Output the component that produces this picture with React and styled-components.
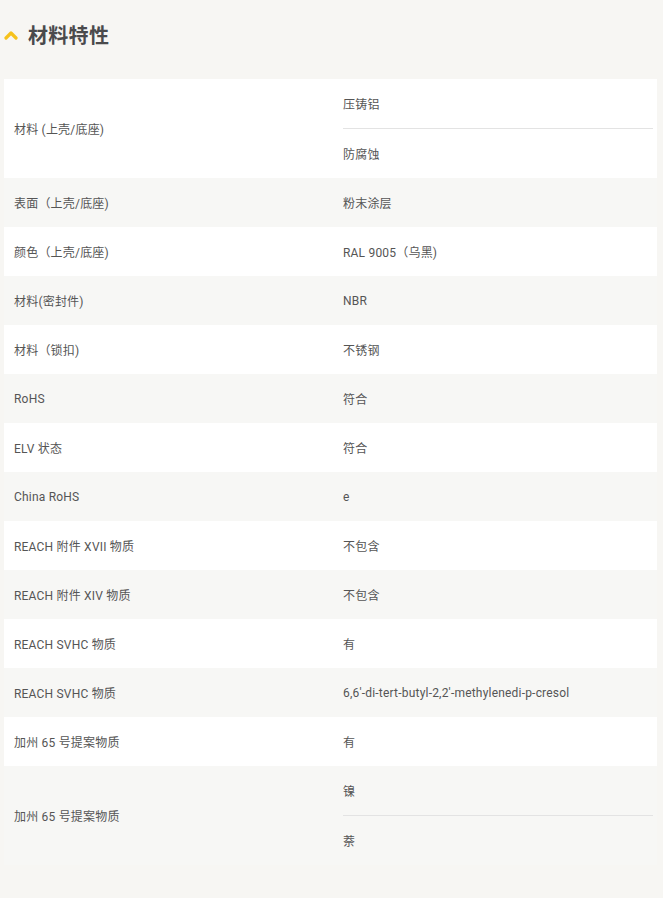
import React from "react";
import styled, { createGlobalStyle } from "styled-components";

const Global = createGlobalStyle`
  html, body { margin: 0; padding: 0; background: #f7f6f3; }
  body { font-family: Roboto, "Noto Sans CJK SC", "Noto Sans", sans-serif; color: #555; }
`;

const Page = styled.div`
  padding: 0 6px 34px 4px;
  background: #f7f6f3;
`;

const Heading = styled.h2`
  display: flex;
  align-items: flex-start;
  gap: 10px;
  margin: 0;
  padding-top: 24px;
  height: 55px;
  line-height: 22px;
  font-family: "Noto Sans CJK SC", sans-serif;
  font-size: 20px;
  font-weight: 700;
  color: #4a4a4c;
  letter-spacing: 0.3px;
`;

const Chevron = styled.svg`
  width: 14px;
  height: 10px;
  margin-top: 6px;
  flex: none;
`;

const Table = styled.div`
  display: flex;
  flex-direction: column;
`;

const Row = styled.div`
  display: grid;
  grid-template-columns: 329px 1fr;
  background: ${(p) => (p.$alt ? "#f7f7f5" : "#ffffff")};
  font-size: 12px;
  letter-spacing: 0.2px;
`;

const Label = styled.div`
  display: flex;
  align-items: center;
  padding: 0 10px;
  min-height: 49px;
`;

const Values = styled.div`
  display: flex;
  flex-direction: column;
`;

const Value = styled.div`
  display: flex;
  align-items: center;
  height: 49px;
  margin: 0 4px 0 10px;
  & + & {
    border-top: 1px solid #e3e3e3;
  }
`;

const rows = [
  ["材料 (上壳/底座)", ["压铸铝", "防腐蚀"]],
  ["表面（上壳/底座)", ["粉末涂层"]],
  ["颜色（上壳/底座)", ["RAL 9005（乌黑)"]],
  ["材料(密封件)", ["NBR"]],
  ["材料（锁扣)", ["不锈钢"]],
  ["RoHS", ["符合"]],
  ["ELV 状态", ["符合"]],
  ["China RoHS", ["e"]],
  ["REACH 附件 XVII 物质", ["不包含"]],
  ["REACH 附件 XIV 物质", ["不包含"]],
  ["REACH SVHC 物质", ["有"]],
  ["REACH SVHC 物质", ["6,6'-di-tert-butyl-2,2'-methylenedi-p-cresol"]],
  ["加州 65 号提案物质", ["有"]],
  ["加州 65 号提案物质", ["镍", "萘"]],
];

export default function App() {
  return (
    <Page>
      <Global />
      <Heading>
        <Chevron viewBox="0 0 14 10">
          <polyline
            points="2,8 7,3 12,8"
            fill="none"
            stroke="#f6c21c"
            strokeWidth="3.2"
            strokeLinecap="round"
            strokeLinejoin="round"
          />
        </Chevron>
        材料特性
      </Heading>
      <Table>
        {rows.map(([label, vals], i) => (
          <Row key={i} $alt={i % 2 === 1}>
            <Label>{label}</Label>
            <Values>
              {vals.map((v, j) => (
                <Value key={j}>{v}</Value>
              ))}
            </Values>
          </Row>
        ))}
      </Table>
    </Page>
  );
}
